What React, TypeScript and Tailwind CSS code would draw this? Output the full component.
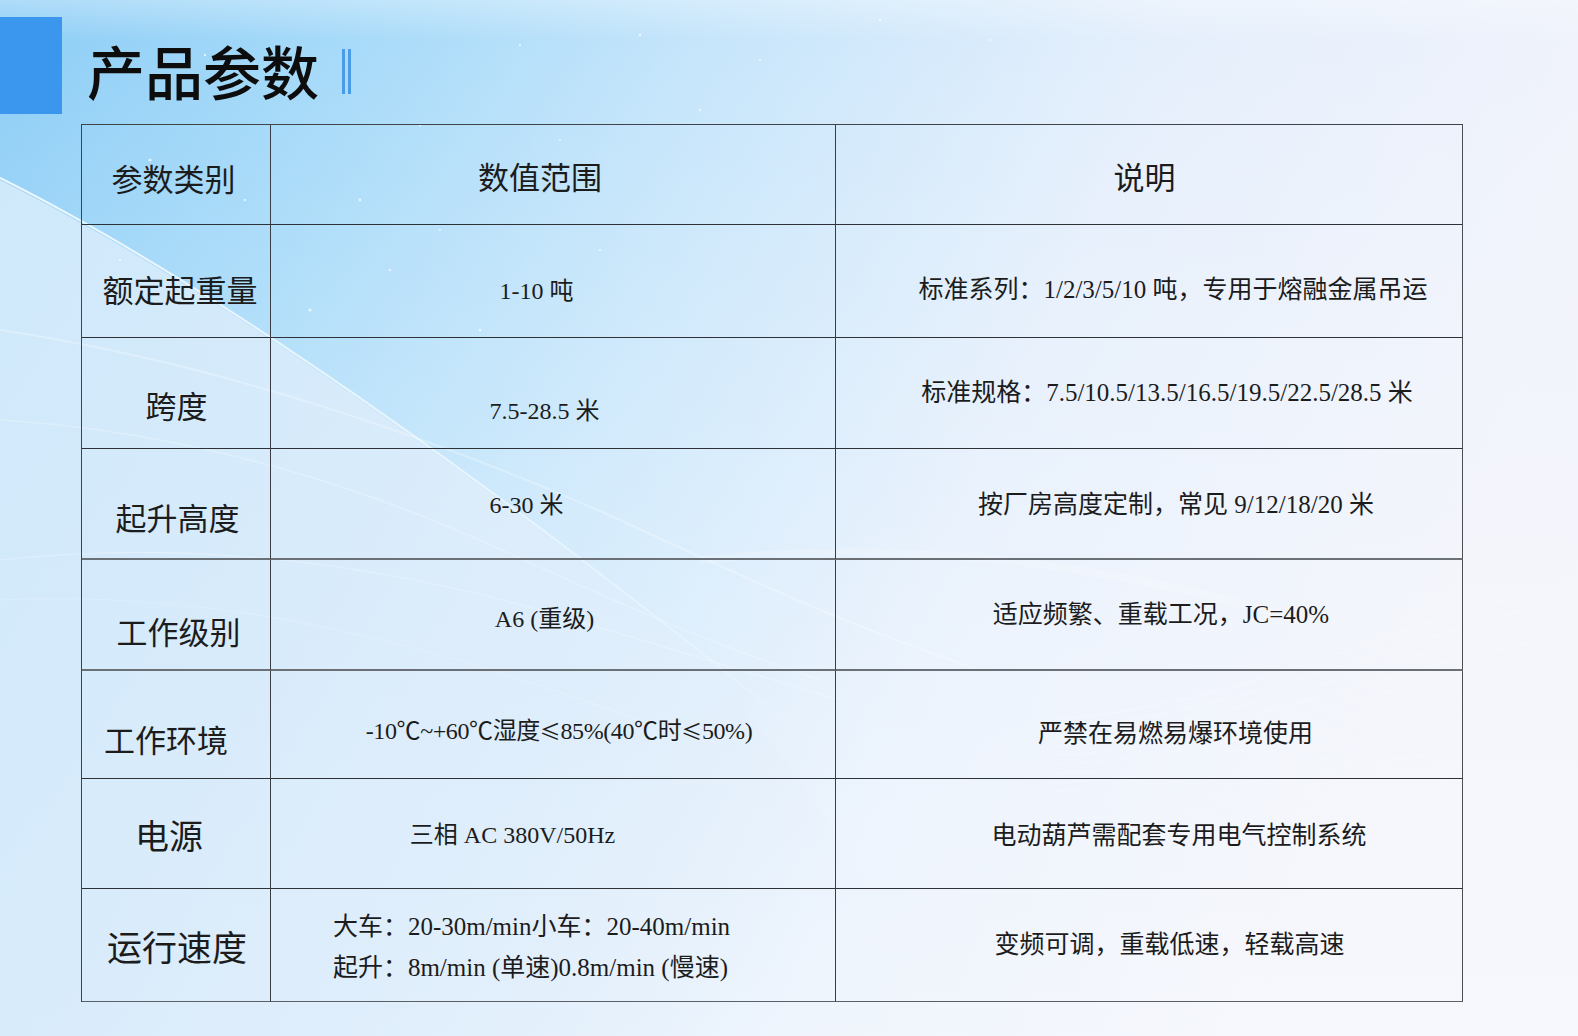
import React from "react";

type CellDef = { text: React.ReactNode; cls: string };
type RowDef = { h: string; line: string; c1: CellDef; c2: CellDef; c3: CellDef };

const Le = () => <span className="font-['Noto_Sans_CJK_SC',sans-serif] text-[21px]">≤</span>;

const rows: RowDef[] = [
  {
    h: "h-[100px]",
    line: "border-b border-[#2e3136]",
    c1: { text: "参数类别", cls: "text-[31px] pt-[14px] pr-[5px]" },
    c2: { text: "数值范围", cls: "text-[31px] pt-[10px] pr-[26px]" },
    c3: { text: "说明", cls: "text-[31px] pt-[10px] pr-[9px]" },
  },
  {
    h: "h-[113px]",
    line: "border-b border-[#2e3136]",
    c1: { text: "额定起重量", cls: "text-[31px] pt-[23px] pl-[8px]" },
    c2: { text: "1-10 吨", cls: "text-[24px] pt-[19px] pr-[33px]" },
    c3: { text: "标准系列：1/2/3/5/10 吨，专用于熔融金属吊运", cls: "text-[25px] pt-[17px] pl-[48px]" },
  },
  {
    h: "h-[111px]",
    line: "border-b border-[#2e3136]",
    c1: { text: "跨度", cls: "text-[31px] pt-[30px] pl-[1px]" },
    c2: { text: "7.5-28.5 米", cls: "text-[24px] pt-[36px] pr-[17px]" },
    c3: { text: "标准规格：7.5/10.5/13.5/16.5/19.5/22.5/28.5 米", cls: "text-[25px] pl-[36px]" },
  },
  {
    h: "h-[111px]",
    line: "border-b-2 border-[#6b7077]",
    c1: { text: "起升高度", cls: "text-[31px] pt-[33px] pl-[3px]" },
    c2: { text: "6-30 米", cls: "text-[24px] pt-[3px] pr-[53px]" },
    c3: { text: "按厂房高度定制，常见 9/12/18/20 米", cls: "text-[25px] pt-[3px] pl-[54px]" },
  },
  {
    h: "h-[111px]",
    line: "border-b-2 border-[#6b7077]",
    c1: { text: "工作级别", cls: "text-[31px] pt-[40px] pl-[5px]" },
    c2: { text: "A6 (重级)", cls: "text-[24px] pt-[8px] pr-[17px]" },
    c3: { text: "适应频繁、重载工况，JC=40%", cls: "text-[25px] pl-[24px]" },
  },
  {
    h: "h-[108px]",
    line: "border-b border-[#2e3136]",
    c1: { text: "工作环境", cls: "text-[31px] pt-[36px] pr-[20px]" },
    c2: {
      text: (
        <span>
          -10℃~+60℃湿度<Le />85%(40℃时<Le />50%)
        </span>
      ),
      cls: "text-[24px] pt-[12px] pl-[12px] tracking-[-0.4px]",
    },
    c3: { text: "严禁在易燃易爆环境使用", cls: "text-[25px] pt-[18px] pl-[53px]" },
  },
  {
    h: "h-[110px]",
    line: "border-b border-[#2e3136]",
    c1: { text: "电源", cls: "text-[34px] pt-[7px] pr-[14px]" },
    c2: { text: "三相 AC 380V/50Hz", cls: "text-[24px] pt-[3px] pr-[81px]" },
    c3: { text: "电动葫芦需配套专用电气控制系统", cls: "text-[25px] pt-[5px] pl-[60px]" },
  },
  {
    h: "h-[113px]",
    line: "border-b border-[#5b6067]",
    c1: { text: "运行速度", cls: "text-[35px] pt-[11px] pl-[2px]" },
    c2: {
      text: (
        <span className="flex flex-col items-start gap-[9px] leading-[32px]">
          <span>大车：20-30m/min小车：20-40m/min</span>
          <span>起升：8m/min (单速)0.8m/min (慢速)</span>
        </span>
      ),
      cls: "text-[25px] pt-[4px] pr-[43px]",
    },
    c3: { text: "变频可调，重载低速，轻载高速", cls: "text-[25px] pl-[41px]" },
  },
];

function Background() {
  const waves = Array.from({ length: 14 }, (_, i) => i);
  const dots: [number, number, number][] = [
    [150, 160, 1.6], [205, 55, 1.2], [265, 60, 1.4], [310, 310, 1.5], [390, 270, 1.2],
    [420, 125, 1.3], [520, 45, 1.1], [640, 35, 1.3], [700, 110, 1.2], [180, 395, 1.1],
    [360, 200, 1.4], [560, 140, 1.1], [245, 200, 1.2], [480, 330, 1.3], [760, 60, 1.0],
    [880, 20, 1.2], [990, 40, 1.1], [120, 260, 1.2], [440, 230, 1.0], [600, 250, 1.1],
  ];
  return (
    <svg
      className="absolute inset-0"
      width="1578"
      height="1036"
      viewBox="0 0 1578 1036"
      aria-hidden="true"
    >
      <defs>
        <linearGradient id="bgMain" x1="0" y1="0" x2="1" y2="0.25">
          <stop offset="0" stop-color="#8ccdf6" />
          <stop offset="0.22" stop-color="#a6daf9" />
          <stop offset="0.45" stop-color="#c8e6fb" />
          <stop offset="0.7" stop-color="#e5effc" />
          <stop offset="1" stop-color="#f1f3fb" />
        </linearGradient>
        <linearGradient id="bgLower" gradientUnits="userSpaceOnUse" x1="0" y1="200" x2="1000" y2="700">
          <stop offset="0" stop-color="#d2eafb" stop-opacity="0.95" />
          <stop offset="0.55" stop-color="#dfedfb" stop-opacity="0.85" />
          <stop offset="1" stop-color="#e6effb" stop-opacity="0" />
        </linearGradient>
        <linearGradient id="edgeFade" gradientUnits="userSpaceOnUse" x1="0" y1="180" x2="830" y2="760">
          <stop offset="0" stop-color="#ffffff" stop-opacity="0.85" />
          <stop offset="0.6" stop-color="#ffffff" stop-opacity="0.55" />
          <stop offset="1" stop-color="#ffffff" stop-opacity="0" />
        </linearGradient>
        <linearGradient id="bgFade" x1="0" y1="0" x2="0" y2="1">
          <stop offset="0" stop-color="#ffffff" stop-opacity="0" />
          <stop offset="0.55" stop-color="#ffffff" stop-opacity="0.22" />
          <stop offset="1" stop-color="#ffffff" stop-opacity="0.4" />
        </linearGradient>
        <linearGradient id="topStrip" x1="0" y1="0" x2="0" y2="1">
          <stop offset="0" stop-color="#ffffff" stop-opacity="0.3" />
          <stop offset="1" stop-color="#ffffff" stop-opacity="0" />
        </linearGradient>
      </defs>
      <rect width="1578" height="1036" fill="url(#bgMain)" />
      <rect width="1578" height="1036" fill="url(#bgFade)" />
      <rect width="1578" height="40" fill="url(#topStrip)" />
      <path
        d="M0 180 C 180 270, 380 410, 560 545 C 700 650, 820 760, 940 1036 L0 1036 Z"
        fill="url(#bgLower)"
      />
      <path
        d="M0 178 C 180 268, 380 408, 560 543 C 660 620, 740 680, 830 760"
        fill="none"
        stroke="url(#edgeFade)"
        stroke-width="2"
      />
      <path
        d="M0 330 C 200 360, 420 430, 620 520 C 760 585, 860 630, 980 670"
        fill="none"
        stroke="#ffffff"
        stroke-opacity="0.28"
        stroke-width="2"
      />
      <path
        d="M0 420 C 160 430, 320 470, 480 540 C 600 595, 700 640, 820 680"
        fill="none"
        stroke="#ffffff"
        stroke-opacity="0.26"
        stroke-width="1.5"
      />
      <path
        d="M0 560 C 180 540, 360 560, 540 610 C 660 645, 740 670, 840 700"
        fill="none"
        stroke="#ffffff"
        stroke-opacity="0.24"
        stroke-width="1.5"
      />
      <path
        d="M0 600 C 220 590, 420 640, 640 720"
        fill="none"
        stroke="#ffffff"
        stroke-opacity="0.2"
        stroke-width="1.2"
      />
      <path
        d="M700 560 C 900 540, 1100 560, 1300 620"
        fill="none"
        stroke="#ffffff"
        stroke-opacity="0.18"
        stroke-width="8"
      />
      {waves.map((i) => (
        <path
          key={i}
          d={`M1050 ${720 + i * 9} C 1250 ${705 + i * 10}, 1400 ${620 + i * 14}, 1578 ${580 + i * 18}`}
          fill="none"
          stroke="#ffffff"
          stroke-opacity={0.3 - i * 0.015}
          stroke-width="1"
        />
      ))}
      {dots.map(([x, y, r], i) => (
        <circle key={i} cx={x} cy={y} r={r} fill="#ffffff" fill-opacity="0.7" />
      ))}
    </svg>
  );
}

export default function App() {
  return (
    <div className="relative w-[1578px] h-[1036px] overflow-hidden text-[#1c1c1c] font-['Liberation_Serif','Noto_Sans_CJK_SC',serif]">
      <Background />
      <div className="relative flex flex-col">
        <div className="flex h-[124px] items-start">
          <div className="mt-[17px] w-[62px] h-[97px] bg-[#3b96ee]" />
          <div className="ml-[25px] mt-[41px] flex items-center">
            <h1 className="text-[58px] leading-none font-medium text-[#0d0d0d] font-['Noto_Sans_CJK_SC',sans-serif]">
              产品参数
            </h1>
            <div className="ml-[23px] flex gap-[3.5px] mt-[2px]">
              <span className="block w-[2.5px] h-[45px] bg-[#4a9cea]" />
              <span className="block w-[2.5px] h-[45px] bg-[#4a9cea]" />
            </div>
          </div>
        </div>
        <div className="ml-[81px] w-[1382px] border-l border-t border-[#3f444a] grid grid-cols-[189px_565px_627px]">
          {rows.map((r, i) => (
            <React.Fragment key={i}>
              <div className={`${r.h} ${r.line} border-r border-r-[#3a3e44] flex items-center justify-center whitespace-nowrap ${r.c1.cls}`}>
                {r.c1.text}
              </div>
              <div className={`${r.h} ${r.line} border-r border-r-[#3a3e44] flex items-center justify-center whitespace-nowrap ${r.c2.cls}`}>
                {r.c2.text}
              </div>
              <div className={`${r.h} ${r.line} border-r border-r-[#4a4f56] flex items-center justify-center whitespace-nowrap ${r.c3.cls}`}>
                {r.c3.text}
              </div>
            </React.Fragment>
          ))}
        </div>
      </div>
    </div>
  );
}
